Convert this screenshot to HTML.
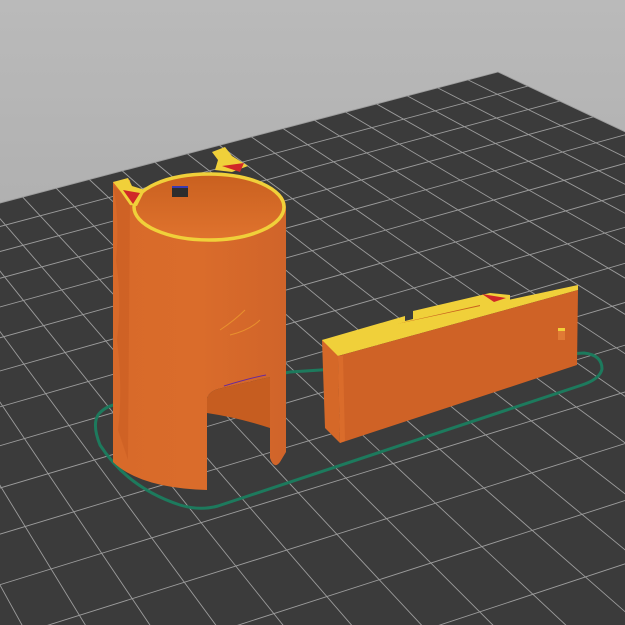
<!DOCTYPE html>
<html><head><style>
html,body{margin:0;padding:0;width:625px;height:625px;overflow:hidden;background:#a8a8a8}
svg{display:block}
</style></head><body>
<svg id="s" width="625" height="625" viewBox="0 0 625 625" xmlns="http://www.w3.org/2000/svg">
<defs>
<linearGradient id="bg" x1="0" y1="0" x2="0" y2="1"><stop offset="0" stop-color="#bababa"/><stop offset="1" stop-color="#9d9d9d"/></linearGradient>
<linearGradient id="cyl" x1="0" y1="0" x2="1" y2="0"><stop offset="0" stop-color="#d86a2a"/><stop offset="0.5" stop-color="#da6c2b"/><stop offset="1" stop-color="#d0642a"/></linearGradient>
<linearGradient id="inner" x1="0" y1="0" x2="0" y2="1"><stop offset="0" stop-color="#c9601f"/><stop offset="1" stop-color="#e0732e"/></linearGradient>
</defs>
<rect width="625" height="625" fill="url(#bg)"/>
<polygon points="498,72 625,132 625,625 0,625 0,203" fill="#3b3b3b"/>
<g id="plate"></g>
<path d="M584,353 Q602,355 602,369 Q600,379 582,385 L218,506 Q200,511 180,505 Q128,488 100,445 Q92,425 98,415 Q105,406 118,404 L290,372 Z" fill="none" stroke="#1d7a5d" stroke-width="3"/>
<path d="M113,182 L113,462 Q140,488 207,490 L207,398 Q210,390 222,388 L270,377 L270,458 Q274,470 280,462 L286,452 L286,207 A77,34 0 0 0 132,207 L130,180 Z" fill="url(#cyl)"/>
<path d="M113,185 Q120,220 116,260 Q122,300 117,340 Q123,390 118,430 L128,460 L130,200 Z" fill="#c95e23" opacity="0.6"/>
<path d="M207,398 Q210,390 222,388 L270,377 L270,428 Q240,418 207,413 Z" fill="#c65d20"/>
<path d="M224,386 Q250,378 266,375" stroke="#6a2a9a" stroke-width="1" fill="none"/>
<ellipse cx="209" cy="207" rx="75" ry="33" fill="url(#inner)" stroke="#f0d03a" stroke-width="3.5"/>
<rect x="172" y="186" width="16" height="11" fill="#2d2d2d"/>
<rect x="172" y="186" width="16" height="2" fill="#3a3ab0"/>
<path d="M113,182 L128,178 L132,186 L145,190 L137,206 L130,205 L121,192 Z" fill="#f0d03a"/>
<path d="M123,190 L140,193 L133,204 Z" fill="#d02828"/>
<path d="M212,152 L225,147 L232,156 L248,166 L232,172 L215,170 L218,160 Z" fill="#f0d03a"/>
<path d="M222,166 L244,163 L240,172 Z" fill="#d02828"/>
<path d="M220,330 Q235,320 245,310 M230,335 Q250,330 260,320" stroke="#e8902e" stroke-width="1" fill="none"/>
<path d="M322,340 L405,316 L405,321 L413,319 L413,311 L490,293 L510,295 L510,302 L338,348 Z" fill="#f0d03a"/>
<path d="M482,294 L506,298 L494,302 Z" fill="#d02828"/>
<path d="M330,343 L405,322 L480,305 L480,309 L335,347 Z" fill="#c8601f"/>
<path d="M322,340 L338,352 L340,443 L325,428 Z" fill="#d56828"/>
<path d="M322,340 L578,285 L578,290 L338,356 Z" fill="#f0d03a"/>
<path d="M338,356 L578,290 L577,365 L340,443 Z" fill="#cf6226"/>
<path d="M338,356 L340,443 L345,441 L343,356 Z" fill="#da6c2b"/>
<rect x="558" y="330" width="7" height="10" fill="#e07a35"/>
<rect x="558" y="328" width="7" height="3" fill="#f0d03a"/>
</svg>
<script>
(function(){
var g=document.getElementById('plate');
var P0=[498,72],VA=[8450,-2020],VB=[-555,-423],a=0.00376,b=0.0277;
function H(u,v){var w=1+a*u+b*v;return[(P0[0]+a*u*VA[0]+b*v*VB[0])/w,(P0[1]+a*u*VA[1]+b*v*VB[1])/w];}
var s='',N=80;
for(var i=0;i<=N;i++){var u=-i;var vmin=(-0.96-a*u)/b;if(vmin>0)break;var p=H(u,0),q=H(u,vmin);s+='<line x1="'+p[0]+'" y1="'+p[1]+'" x2="'+q[0]+'" y2="'+q[1]+'" stroke="#9c9c9c" stroke-width="0.9"/>';}
for(var j=0;j>=-40;j--){var umin=(-0.96-b*j)/a;if(umin>0)break;umin=Math.max(umin,-N);var p=H(0,j),q=H(umin,j);s+='<line x1="'+p[0]+'" y1="'+p[1]+'" x2="'+q[0]+'" y2="'+q[1]+'" stroke="#9c9c9c" stroke-width="0.9"/>';}
g.innerHTML=s;
})();
</script>
</body></html>
